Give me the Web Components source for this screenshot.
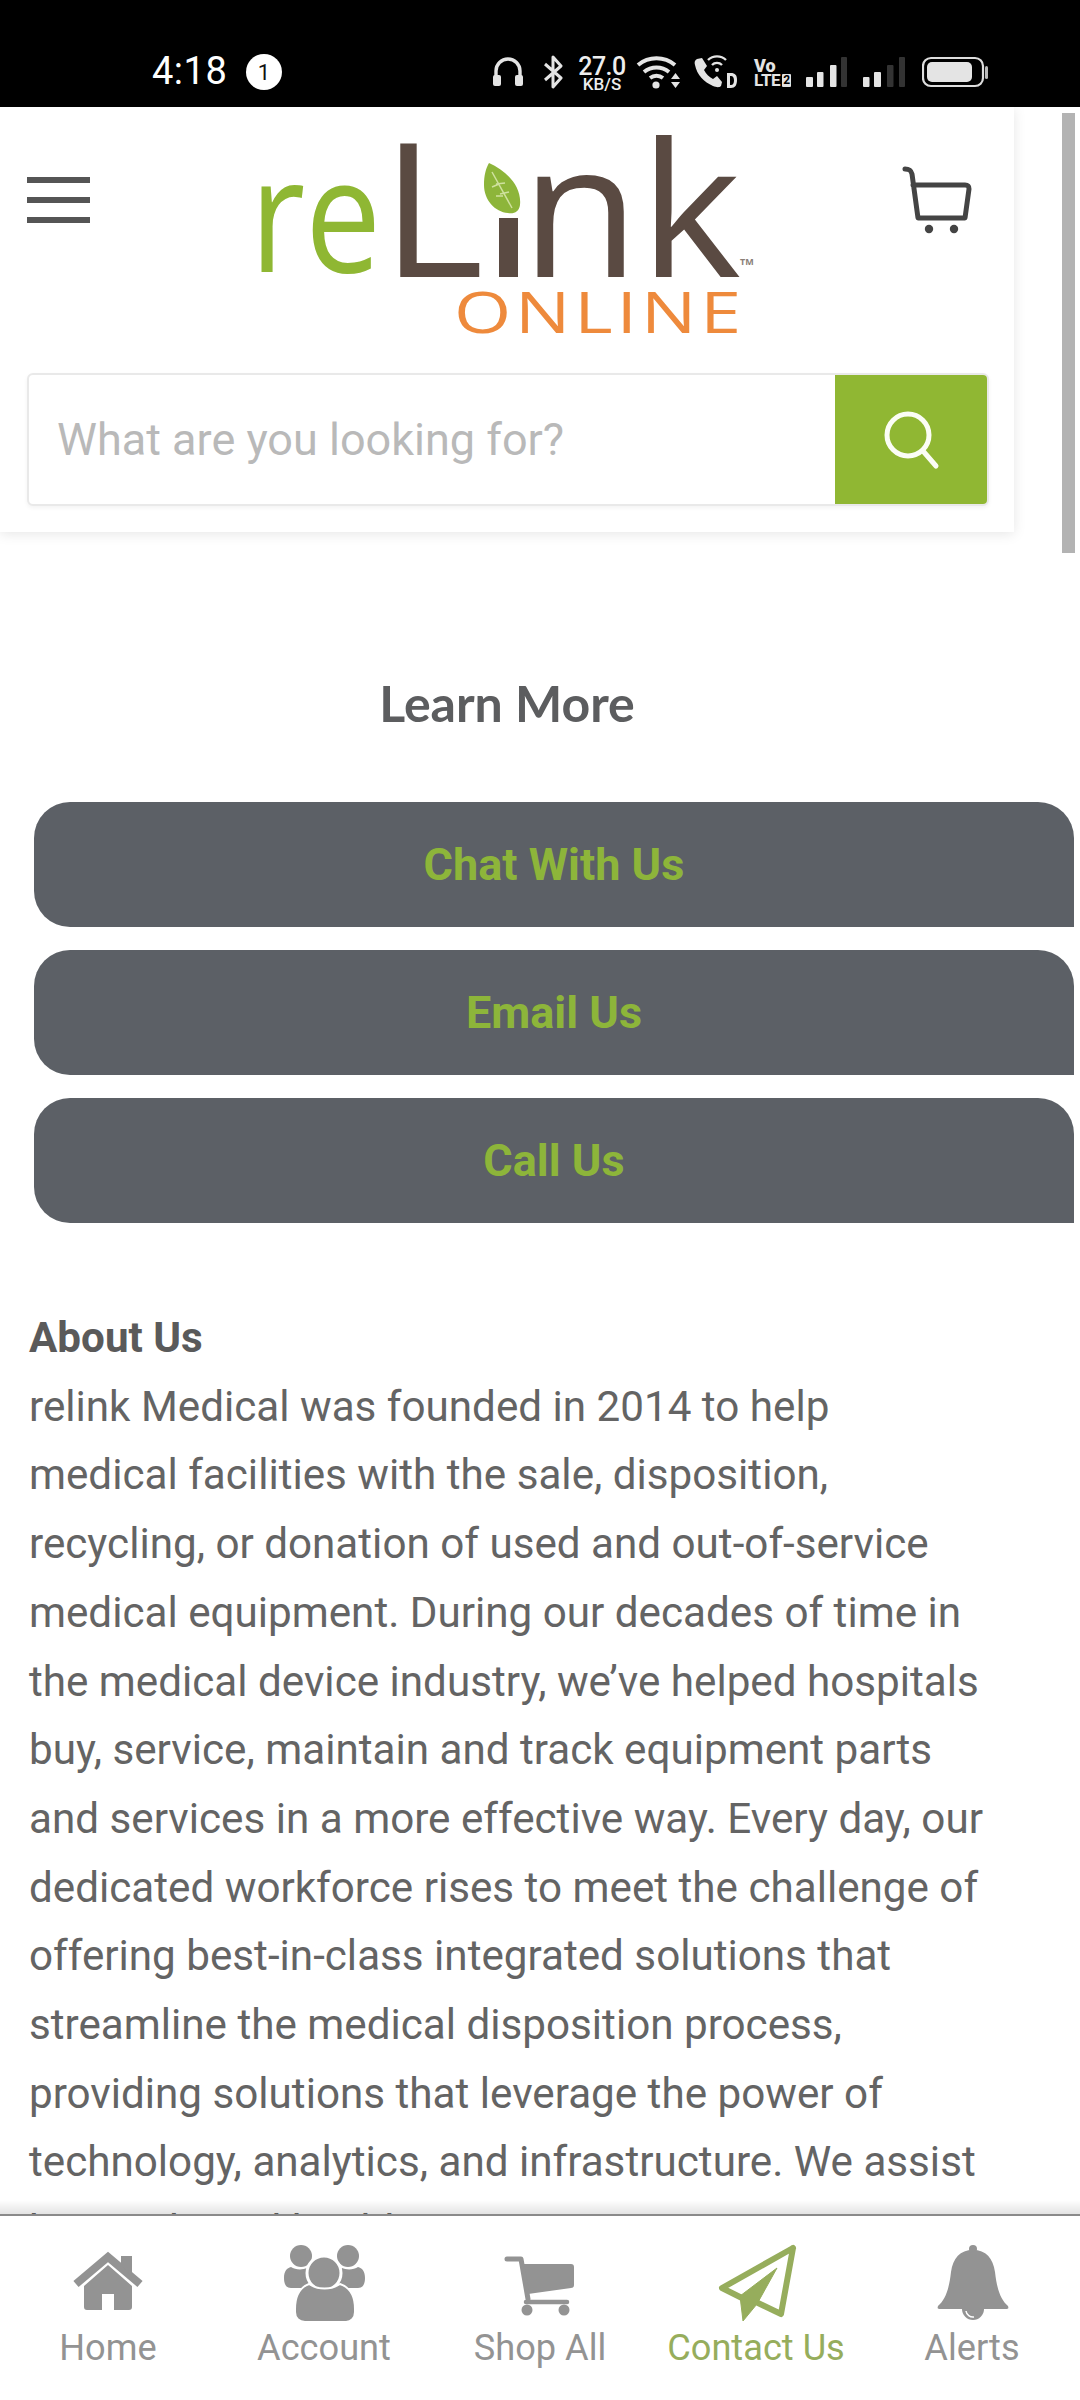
<!DOCTYPE html>
<html lang="en"><head><meta charset="utf-8"><title>reLink Online</title>
<style>
html,body{margin:0;padding:0;background:#fff}
body{width:1080px;height:2400px;overflow:hidden;font-family:Roboto,"Liberation Sans",sans-serif}
app-shell{display:flex}
</style></head><body>
<app-shell>
  <status-bar></status-bar>
  <page-body>
    <site-header></site-header>
    <section-title>Learn More</section-title>
    <cta-button>Chat With Us</cta-button>
    <cta-button>Email Us</cta-button>
    <cta-button>Call Us</cta-button>
    <about-text></about-text>
  </page-body>
  <bottom-nav>
    <nav-item label="Home" icon="home"></nav-item>
    <nav-item label="Account" icon="account"></nav-item>
    <nav-item label="Shop All" icon="shop"></nav-item>
    <nav-item label="Contact Us" icon="plane" active></nav-item>
    <nav-item label="Alerts" icon="bell"></nav-item>
  </bottom-nav>
</app-shell>
<script>
function def(name,html){
  customElements.define(name,class extends HTMLElement{
    connectedCallback(){
      if(this.shadowRoot)return;
      const r=this.attachShadow({mode:'open'});
      r.innerHTML=typeof html==='function'?html(this):html;
    }
  });
}
def('app-shell',`<style>:host{display:flex;flex-direction:column;width:1080px;height:2400px;position:relative;overflow:hidden;background:#fff}</style><slot></slot>`);

def('status-bar',`<style>
:host{display:flex;flex:none;height:107px;box-sizing:border-box;padding:37px 0 0 152px;background:#000;color:#fff;align-items:center;font-family:Roboto,sans-serif}
svg{display:block;flex:none;height:40px}
.time{width:72px;font-size:38px;line-height:40px;color:#fff;letter-spacing:.5px;margin-top:-2px}
.badge{width:36px;height:36px;margin-left:22px;border-radius:50%;background:#fff;color:#111;font-size:22px;line-height:37px;text-align:center;flex:none}
.speed{width:48px;margin-left:15px;display:flex;flex-direction:column;align-items:center;color:#eee;font-weight:500;flex:none;margin-top:2px}
.speed b{font-weight:500;font-size:25px;line-height:21px;letter-spacing:-.5px}
.speed i{font-style:normal;font-size:17px;line-height:14px}
.volte{width:37px;margin-left:16px;display:flex;flex-direction:column;color:#e4e4e4;font-weight:700;flex:none;margin-top:2px}
.volte b{font-size:18px;line-height:15px}
.volte i{font-style:normal;font-size:17px;line-height:15px;letter-spacing:-.4px;display:flex;align-items:center;gap:2px}
.volte u{text-decoration:none;background:#e4e4e4;color:#000;font-size:12px;line-height:13px;width:11px;text-align:center;border-radius:1px}
</style>
<span class="time">4:18</span><span class="badge">1</span>
<svg style="margin-left:211px;width:30px" viewBox="493 52 30 40"><path d="M496 78V71a12 12 0 0 1 24 0v7" fill="none" stroke="#e4e4e4" stroke-width="3.4"/><rect x="493" y="75" width="8" height="11" rx="2" fill="#e4e4e4"/><rect x="515" y="75" width="8" height="11" rx="2" fill="#e4e4e4"/></svg>
<svg style="margin-left:20px;width:20px" viewBox="543 52 20 40"><path d="M545 64 561 78 553 87V57l8 9-16 14" fill="none" stroke="#e4e4e4" stroke-width="3" stroke-linejoin="round"/></svg>
<div class="speed"><b>27.0</b><i>KB/S</i></div>
<svg style="margin-left:10px;width:45px" viewBox="636 52 45 40"><g fill="none" stroke="#e4e4e4" stroke-width="4"><path d="M638 65a29 29 0 0 1 37 0"/><path d="M644 72a20 20 0 0 1 25 0"/><path d="M650 78a11 11 0 0 1 13 0"/></g><circle cx="656" cy="85" r="3.6" fill="#e4e4e4"/><path d="M671 79h9l-4.500-6zM671 82h9l-4.500 6z" fill="#e4e4e4"/></svg>
<svg style="margin-left:10px;width:47px" viewBox="691 52 47 40"><path d="M697 59l5-1 5 8-3 4c2 4 5 7 9 9l4-3 5 6-1 4c-2 2-5 1-8 0-9-4-16-11-18-21-1-3 0-5 2-6z" fill="#e4e4e4"/><g fill="none" stroke="#e4e4e4" stroke-width="2.4"><path d="M708 60a13 13 0 0 1 18 0"/><path d="M712 65a7 7 0 0 1 10 0"/></g><circle cx="717" cy="70" r="2" fill="#e4e4e4"/><path d="M727 73h4c4 0 6 2 6 7s-2 8-6 8h-4z M730 76v9h1c2 0 3-2 3-4.500s-1-4.500-3-4.500z" fill="#e4e4e4" fill-rule="evenodd"/></svg>
<div class="volte"><b>Vo</b><i>LTE<u>2</u></i></div>
<svg style="margin-left:14px;width:101px" viewBox="805 52 101 40"><g fill="#e4e4e4"><rect x="806" y="77" width="7" height="10" rx="1"/><rect x="817" y="72" width="6.500" height="15" rx="1"/><rect x="830" y="65" width="6.500" height="22" rx="1"/><rect x="863" y="77" width="6.500" height="10" rx="1"/><rect x="874" y="72" width="7" height="15" rx="1"/></g><g fill="#333"><rect x="841" y="57" width="6" height="30" rx="1"/><rect x="887" y="65" width="6.500" height="22" rx="1"/><rect x="899" y="57" width="6" height="30" rx="1"/></g></svg>
<svg style="margin-left:16px;width:68px" viewBox="922 52 68 40"><rect x="923" y="58" width="60" height="28" rx="8" fill="none" stroke="#ddd" stroke-width="2.200"/><rect x="927" y="62" width="45" height="20" rx="5" fill="#e4e4e4"/><rect x="985" y="66" width="3" height="13" rx="1.500" fill="#bbb"/></svg>`);

def('page-body',`<style>:host{display:block;flex:1;min-height:0;overflow:hidden;position:relative;width:1080px}
.bar{position:absolute;left:1062px;top:6px;width:13px;height:440px;background:#b3b3b3}
</style><div class="bar"></div><slot></slot>`);

def('site-header',`<style>
:host{display:block;width:1014px;height:425px;background:#fff;box-shadow:0 2px 12px rgba(0,0,0,.10);box-sizing:border-box;padding:0 25px 0 27px;position:relative}
.top{display:flex;height:266px;align-items:flex-start}
.burger{flex:none;width:63px;margin-top:70px;display:flex;flex-direction:column;gap:14px}
.burger i{display:block;height:6px;background:#555}
.logo{flex:none;width:520px;height:220px;margin:18px 0 0 150px;display:block;overflow:visible}
.cart{flex:none;width:70px;height:70px;margin:58px 0 0 142px;display:block}
.search{display:flex;width:962px;height:133px;box-sizing:border-box;border:2px solid #e9e9e9;border-radius:6px;box-shadow:0 2px 4px rgba(0,0,0,.05);background:#fff;overflow:hidden}
.ph{flex:1;padding-left:28px;font:400 45px/129px Roboto,sans-serif;color:#b9b9b9}
.btn{flex:none;width:152px;background:#90b733;display:flex;align-items:center;justify-content:center}
.btn svg{width:60px;height:60px;display:block}
</style>
<div class="top">
<div class="burger"><i></i><i></i><i></i></div>
<svg class="logo" viewBox="240 125 520 220" role="img" aria-label="reLink Online">
<text x="250" y="272" font-family="Open Sans" font-size="159" font-weight="500" fill="#8fb733" textLength="131" lengthAdjust="spacingAndGlyphs">re</text>
<text x="381" y="277" font-family="Open Sans" font-size="187" font-weight="500" fill="#5a4a42" textLength="103" lengthAdjust="spacingAndGlyphs">L</text>
<rect x="499" y="218" width="19" height="59" fill="#5a4a42"/>
<path d="M489 163C505 170 522 185 520 205 519 212 514 214 508 213 495 212 484 200 484 185 484 175 486 168 489 163Z" fill="#8db53a"/>
<path d="M492 172 512 208M496 184l9-1M500 194l9-2M499 184l-7 3M503 196l-7 0" stroke="#cfe19e" stroke-width="1.500" fill="none"/>
<text x="521" y="277" font-family="Open Sans" font-size="187" font-weight="500" fill="#5a4a42" textLength="220" lengthAdjust="spacingAndGlyphs">nk</text>
<text x="740" y="265" font-family="Open Sans" font-size="9" font-weight="700" fill="#8a8078">TM</text>
<text x="454" y="333" font-family="Open Sans" font-size="57" font-weight="500" fill="#ee8a3c" letter-spacing="3" textLength="291" lengthAdjust="spacingAndGlyphs">ONLINE</text>
</svg>
<svg class="cart" viewBox="902 165 70 70"><path d="M905 169c4 0 6 1 7 5l6 44h47l4-29c0-3-1-4-4-4h-52" fill="none" stroke="#444" stroke-width="5" stroke-linecap="round" stroke-linejoin="round"/><circle cx="929" cy="229" r="4.200" fill="#444"/><circle cx="954" cy="229" r="4.200" fill="#444"/></svg>
</div>
<div class="search"><div class="ph">What are you looking for?</div><div class="btn"><svg viewBox="881 408 60 60"><circle cx="908" cy="433" r="21" fill="none" stroke="#fbfdf5" stroke-width="5"/><path d="M923 449l13 15" stroke="#fbfdf5" stroke-width="5" stroke-linecap="round"/></svg></div></div>`);

def('section-title',`<style>:host{display:block;width:1014px;margin-top:141px;height:60px;margin-bottom:69px;text-align:center;font:700 50px/60px Lato,sans-serif;color:#5c5d5f}</style><slot></slot>`);

def('cta-button',`<style>:host{display:flex;align-items:center;justify-content:center;width:1040px;height:125px;margin:0 0 23px 34px;background:#5c6066;border-radius:36px 36px 0 36px;color:#8db53a;font:700 45px/1 Roboto,sans-serif}</style><slot></slot>`);

def('about-text',`<style>:host{display:block;width:1000px;margin:81px 0 0 29px;font:400 42.2px/68.7px Roboto,sans-serif;color:#646464}b{font-weight:700;color:#5a5a5a;display:block}</style>
<b>About Us</b>relink Medical was founded in 2014 to help<br>medical facilities with the sale, disposition,<br>recycling, or donation of used and out-of-service<br>medical equipment. During our decades of time in<br>the medical device industry, we’ve helped hospitals<br>buy, service, maintain and track equipment parts<br>and services in a more effective way. Every day, our<br>dedicated workforce rises to meet the challenge of<br>offering best-in-class integrated solutions that<br>streamline the medical disposition process,<br>providing solutions that leverage the power of<br>technology, analytics, and infrastructure. We assist<br>hospitals and health systems`);

def('bottom-nav',`<style>:host{display:grid;grid-template-columns:repeat(5,216px);flex:none;height:186px;box-sizing:border-box;border-top:2px solid #8a8a8a;background:#fff;position:relative}
:host::before{content:"";position:absolute;left:0;right:0;top:-16px;height:14px;background:linear-gradient(rgba(0,0,0,0),rgba(0,0,0,.11))}
</style><slot></slot>`);

const ICONS={
home:`<path d="M21 42 45 21 69 42V63a3 3 0 0 1-3 3H51V50H39V66H24a3 3 0 0 1-3-3Z"/><path d="M13 40 45 13 77 40" fill="none" stroke="currentColor" stroke-width="8"/><path d="M58 12H69V32L58 22Z"/>`,
account:`<circle cx="22" cy="12" r="11"/><circle cx="69" cy="12" r="11"/><path d="M5 34c0-7 3-10 7-11 4 3 12 3 16 1 4 2 6 6 6 12l-4 8H12c-5 0-7-4-7-10Z"/><path d="M86 34c0-7-3-10-7-11-4 3-12 3-16 1-4 2-6 6-6 12l4 8h18c5 0 7-4 7-10Z"/><circle cx="45" cy="29" r="17" stroke="#fff" stroke-width="3"/><path d="M16 65c0-14 6-22 14-25 9 6 22 6 31 0 9 3 15 11 15 25v3c0 6-4 10-9 10H26c-6 0-10-4-10-10Z" stroke="#fff" stroke-width="2"/>`,
shop:`<path d="M27 20H76a3 3 0 0 1 3 3V41a3 3 0 0 1-3 3L33 50Z"/><path d="M12 15H26L33 55" fill="none" stroke="currentColor" stroke-width="5" stroke-linecap="round" stroke-linejoin="round"/><path d="M31 58H72" fill="none" stroke="currentColor" stroke-width="4.500" stroke-linecap="round"/><circle cx="32" cy="66" r="5.500"/><circle cx="69" cy="66" r="5.500"/>`,
plane:`<path d="M82 4 11 44 31 54M47 59 70 70 82 4" fill="none" stroke="currentColor" stroke-width="6" stroke-linejoin="round" stroke-linecap="round"/><path d="M66 24 29 52 32 77 46 60Z" stroke="currentColor" stroke-width="1" stroke-linejoin="round"/>`,
bell:`<circle cx="46" cy="5" r="4"/><path d="M46 6C33 6 26 14 24 28 22 46 18 56 11 62 10 65 11 65 14 65H78C81 65 82 65 81 62 74 56 70 46 68 28 66 14 59 6 46 6Z"/><path d="M35 65a11 11 0 0 0 22 0Z"/><path d="M39 67a7 7 0 0 0 8 6" fill="none" stroke="#fff" stroke-width="1.500"/>`
};
def('nav-item',h=>`<style>:host{display:flex;flex-direction:column;align-items:center;color:${h.hasAttribute('active')?'#96ad5c':'#939393'};font:400 36.200px/42px Roboto,sans-serif}
svg{display:block;width:90px;height:80px;margin-top:28px;fill:currentColor}
span{display:block;margin-top:3px;white-space:nowrap}</style>
<svg viewBox="0 0 90 80">${ICONS[h.getAttribute('icon')]}</svg><span>${h.getAttribute('label')}</span>`);
</script>
</body></html>
